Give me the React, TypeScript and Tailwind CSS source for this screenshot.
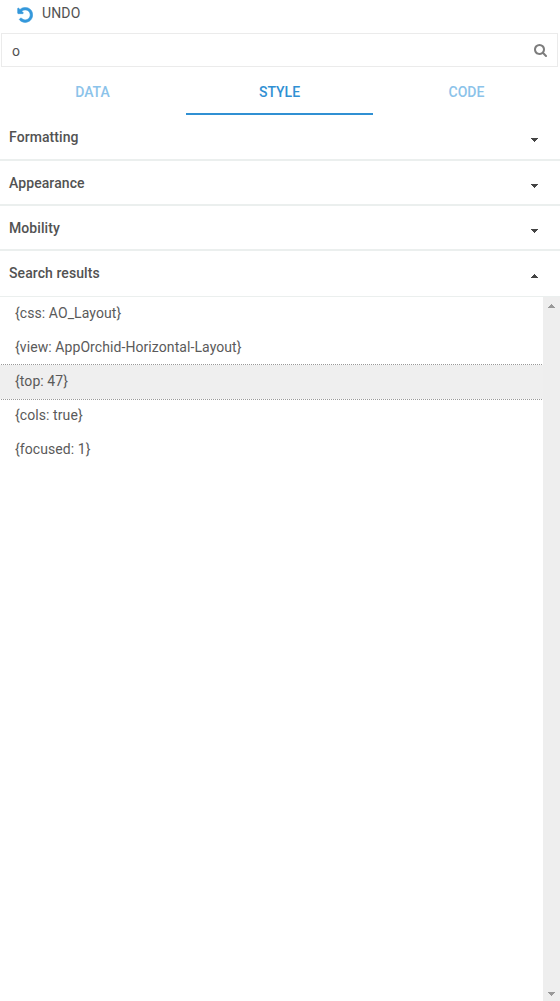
import { useState } from "react";

const TABS = [
  { name: "DATA", nudge: "pr-px" },
  { name: "STYLE", nudge: "" },
  { name: "CODE", nudge: "" },
];

const SECTIONS = [
  { title: "Formatting", box: "h-[46px] border-b-2" },
  { title: "Appearance", box: "h-[45px] border-b-2" },
  { title: "Mobility", box: "h-[45px] border-b-2" },
  { title: "Search results", box: "h-[46px] border-b", open: true },
];

const RESULTS = [
  "{css: AO_Layout}",
  "{view: AppOrchid-Horizontal-Layout}",
  "{top: 47}",
  "{cols: true}",
  "{focused: 1}",
];

function Caret({ up = false, className = "" }: { up?: boolean; className?: string }) {
  return (
    <svg width="7" height="4" viewBox="0 0 7 4" shapeRendering="crispEdges" fill="currentColor" className={className}>
      <path d={up ? "M3 0h1v1h1v1h1v1h1v1H0V3h1V2h1V1h1z" : "M0 0h7v1H6v1H5v1H4v1H3V3H2V2H1V1H0z"} />
    </svg>
  );
}

export default function App() {
  const [tab, setTab] = useState("STYLE");
  const [query, setQuery] = useState("o");
  const [selected, setSelected] = useState(2);

  return (
    <div className="flex h-[1001px] w-[560px] flex-col overflow-hidden bg-white font-['Roboto',sans-serif] text-[14px] leading-5 text-[#525252]">
      <button className="flex h-[33px] shrink-0 items-start pl-[17px] text-left">
        <svg width="16" height="16" viewBox="-70 -40 1640 1640" fill="#3498db" stroke="#3498db" strokeWidth="60" className="mt-[7px]">
          <path d="M1536 768q0 156-61 298t-164 245-245 164-298 61q-172 0-327-72.500T177 1259q-7-10-6.500-22.500T179 1216l137-138q10-9 25-9 16 2 23 12 73 95 179 147t225 52q104 0 198.500-40.500T1130 1130t109.500-163.500T1280 768t-40.500-198.500T1130 406 966.500 296.500 768 256q-98 0-188 35.500T420 393l137 138q31 30 14 69-17 40-59 40H64q-26 0-45-19T0 576V128q0-42 40-59 39-17 69 14l130 129Q346 111 483.500 55.500T768 0q156 0 298 61t245 164 164 245 61 298z" />
        </svg>
        <span className="ml-[9px] mt-[3px] tracking-[0.15px]">UNDO</span>
      </button>

      <div className="ml-px flex h-[34px] w-[557px] shrink-0 items-center border border-[#ebebeb] pl-[10px] pr-[10px]">
        <input
          className="min-w-0 flex-1 bg-transparent pt-px outline-none"
          value={query}
          onChange={(e) => setQuery(e.target.value)}
        />
        <svg width="13" height="13" viewBox="0 0 1664 1664" fill="#7d7d7d">
          <path d="M1152 704q0-185-131.500-316.500T704 256 387.500 387.500 256 704t131.500 316.500T704 1152t316.500-131.500T1152 704zm512 832q0 52-38 90t-90 38q-54 0-90-38l-343-342q-179 124-399 124-143 0-273.500-55.500t-225-150-150-225T0 704t55.500-273.500 150-225 225-150T704 0t273.500 55.500 225 150 150 225T1408 704q0 220-124 399l343 343q37 37 37 90z" />
        </svg>
      </div>

      <div className="grid h-12 shrink-0 grid-cols-[186px_187px_187px]">
        {TABS.map(({ name, nudge }) => (
          <button
            key={name}
            onClick={() => setTab(name)}
            className={
              "border-b-2 pt-1 font-medium " +
              nudge +
              (tab === name ? " border-[#3090d3] text-[#3090d3]" : " border-transparent text-[#8bc3ea]")
            }
          >
            {name}
          </button>
        ))}
      </div>

      {SECTIONS.map(({ title, box, open }) => (
        <div key={title} className={"flex shrink-0 items-start justify-between border-[#ebefee] pl-[9px] pr-[22px] pt-3 " + box}>
          <span className="font-medium tracking-[0.08px]">{title}</span>
          <Caret up={open} className="mt-[11px] text-[#444]" />
        </div>
      ))}

      <div className="flex min-h-0 flex-1">
        <div className="-mt-px min-w-0 flex-1 overflow-hidden pt-px">
          {RESULTS.map((text, i) => (
            <div
              key={text}
              onClick={() => setSelected(i)}
              className={
                "h-[34px] pl-[15px] pt-[6px] tracking-[0.08px] text-[#5a5a5a] " +
                (i === selected ? "relative bg-[#efefef] outline-1 outline-dotted outline-[#999]" : "")
              }
            >
              {text}
            </div>
          ))}
        </div>
        <div className="flex w-[17px] shrink-0 flex-col items-center justify-between bg-[#eeeeee] pb-[5px] pt-[7px] text-[#999]">
          <Caret up />
          <Caret />
        </div>
      </div>
    </div>
  );
}
